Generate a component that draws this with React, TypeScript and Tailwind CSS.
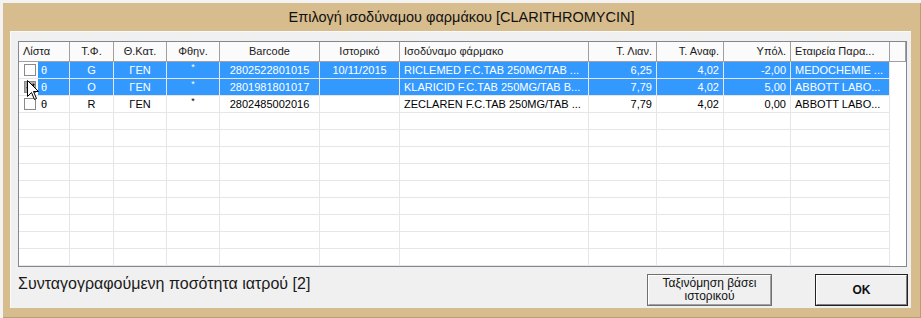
const FONT = { fontFamily: '"Liberation Sans", Arial, sans-serif' };

type Col = { w: number; align: 'left' | 'center' | 'right'; title: string };

const cols: Col[] = [
  { w: 51, align: 'left', title: 'Λίστα' },
  { w: 44, align: 'center', title: 'Τ.Φ.' },
  { w: 53, align: 'center', title: 'Θ.Κατ.' },
  { w: 53, align: 'center', title: 'Φθην.' },
  { w: 100, align: 'center', title: 'Barcode' },
  { w: 80, align: 'center', title: 'Ιστορικό' },
  { w: 189, align: 'left', title: 'Ισοδύναμο φάρμακο' },
  { w: 68, align: 'right', title: 'Τ. Λιαν.' },
  { w: 67, align: 'right', title: 'Τ. Αναφ.' },
  { w: 67, align: 'right', title: 'Υπόλ.' },
  { w: 99, align: 'left', title: 'Εταιρεία Παρα...' },
];

const rows = [
  { sel: true, checked: false, cells: ['θ', 'G', 'ΓΕΝ', '*', '2802522801015', '10/11/2015', 'RICLEMED F.C.TAB 250MG/TAB ...', '6,25', '4,02', '-2,00', 'MEDOCHEMIE ...'] },
  { sel: true, checked: true, cells: ['θ', 'O', 'ΓΕΝ', '*', '2801981801017', '', 'KLARICID F.C.TAB 250MG/TAB B...', '7,79', '4,02', '5,00', 'ABBOTT LABO...'] },
  { sel: false, checked: false, cells: ['θ', 'R', 'ΓΕΝ', '*', '2802485002016', '', 'ZECLAREN F.C.TAB 250MG/TAB ...', '7,79', '4,02', '0,00', 'ABBOTT LABO...'] },
];

const alignCls = {
  left: 'justify-start pl-[4px]',
  center: 'justify-center',
  right: 'justify-end pr-[4px]',
};

function CheckBox({ checked }: { checked: boolean }) {
  return (
    <div
      className={
        'ml-[5px] w-[12px] h-[12px] border border-[#8a8a8a] flex items-center justify-center ' +
        (checked ? 'bg-[#a8a8a8]' : 'bg-white')
      }
    >
      {checked && (
        <svg width="9" height="8" viewBox="0 0 9 8">
          <path d="M1 4 L3.5 6.5 L8 1" stroke="#000" strokeWidth="1.8" fill="none" />
        </svg>
      )}
    </div>
  );
}

function GridRow({ row }: { row?: (typeof rows)[number] }) {
  const sel = row?.sel;
  return (
    <div className="flex h-[17px] w-[871px] border-b border-[#e6e6e6]">
      {cols.map((c, i) => {
        if (i === 0) {
          return (
            <div key={i} className="flex h-full border-r border-[#e6e6e6]" style={{ width: c.w }}>
              <div className="w-[19px] h-full flex items-center bg-white">
                {row && <CheckBox checked={row.checked} />}
              </div>
              <div
                className={
                  'flex-1 h-full flex items-center pl-[3px] ' +
                  (sel ? 'bg-[#3399ff] text-white' : 'text-black')
                }
              >
                {row?.cells[0]}
              </div>
            </div>
          );
        }
        const v = row?.cells[i] ?? '';
        return (
          <div
            key={i}
            className={
              'h-full flex items-center border-r border-[#e6e6e6] whitespace-nowrap overflow-hidden ' +
              alignCls[c.align] +
              (sel ? ' bg-[#3399ff] text-white' : ' text-black')
            }
            style={{ width: c.w }}
          >
            {v === '*' ? <span className="text-[9px] -mt-[5px]">*</span> : v}
          </div>
        );
      })}
    </div>
  );
}

function Grid() {
  const empties = Array.from({ length: 9 });
  return (
    <div className="ml-[7px] mr-[4px] mt-[9px] h-[226px] border border-[#828790] bg-white text-[11px] overflow-hidden">
      <div className="flex h-[20px] border-b border-[#a0a0a0] bg-[#fbfbfb] text-[#1a1a1a]">
        {cols.map((c, i) => (
          <div
            key={i}
            className={'h-full flex items-center border-r border-[#a0a0a0] whitespace-nowrap ' + alignCls[c.align]}
            style={{ width: c.w }}
          >
            {c.title}
          </div>
        ))}
        <div className="flex-1 h-full border-r border-[#a0a0a0]" />
      </div>
      {rows.map((r, i) => (
        <GridRow key={i} row={r} />
      ))}
      {empties.map((_, i) => (
        <GridRow key={'e' + i} />
      ))}
    </div>
  );
}

export default function App() {
  return (
    <div className="relative w-[921px] h-[318px] bg-[#f3f3f3] pt-[3px] pl-[3px] overflow-hidden" style={FONT}>
      <div className="w-[918px] h-[315px] bg-[#d7bc8d] flex flex-col border-r border-b border-[#b99e70]">
        <div className="h-[28px] flex items-center justify-center text-[14.5px] text-[#111] pt-[2px]">
          Επιλογή ισοδύναμου φαρμάκου [CLARITHROMYCIN]
        </div>
        <div className="ml-[7px] mr-[9px] h-[277px] bg-[#f0f0f0] flex flex-col border-t border-l border-[#fafafa]">
          <Grid />
          <div className="flex items-start mt-[7px] h-[32px] pl-[7px] pr-[3px]">
            <div className="text-[16px] leading-[18px] mt-[1px] text-[#1a1a1a] flex-1">
              Συνταγογραφούμενη ποσότητα ιατρού [2]
            </div>
            <div className="w-[125px] h-[32px] border border-[#707070] bg-[#f0f0f0]">
              <div className="w-full h-full border-t border-l border-white border-r border-b border-r-[#a0a0a0] border-b-[#a0a0a0] flex flex-col items-center justify-center text-[12px] leading-[13px] text-[#111]">
                <span>Ταξινόμηση βάσει</span>
                <span>ιστορικού</span>
              </div>
            </div>
            <div className="ml-[43px] w-[93px] h-[32px] border border-[#222] bg-[#f0f0f0]">
              <div className="w-full h-full border-t border-l border-white border-r border-b border-r-[#808080] border-b-[#808080] flex items-center justify-center text-[12px] font-bold text-[#111]">
                OK
              </div>
            </div>
          </div>
        </div>
      </div>
      <svg className="absolute left-[27px] top-[80px]" width="13" height="21" viewBox="0 0 13 21">
        <path d="M0.5 0.5 L0.5 16.5 L4.5 12.5 L7.5 19.5 L9.5 18.5 L6.5 11.5 L11.5 11.5 Z" fill="#fff" stroke="#000" strokeWidth="1" />
      </svg>
    </div>
  );
}
